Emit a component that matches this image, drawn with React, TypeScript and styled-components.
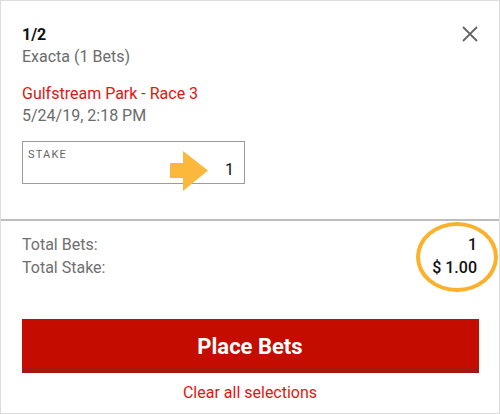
import React from "react"
import styled, { createGlobalStyle } from "styled-components"

const GlobalStyle = createGlobalStyle`
  html, body {
    margin: 0;
    padding: 0;
    background: #ffffff;
  }
  body {
    font-family: Roboto, "Liberation Sans", sans-serif;
  }
`

export default function App(){
  return(
    <>
      <GlobalStyle />
      <Slip>
        <BetSection>
          <Header>
            <div>
              <Count>1/2</Count>
              <Muted>Exacta (1 Bets)</Muted>
            </div>
            <CloseButton aria-label="close">
              <svg width="16" height="16" viewBox="0 0 16 16">
                <path d="M1 1 L15 15 M15 1 L1 15" stroke="#666" strokeWidth="1.8" fill="none" />
              </svg>
            </CloseButton>
          </Header>
          <Race>
            <RaceName>Gulfstream Park - Race 3</RaceName>
            <Muted>5/24/19, 2:18 PM</Muted>
          </Race>
          <StakeBox>
            <StakeLabel>STAKE</StakeLabel>
            <StakeValue>1</StakeValue>
            <Arrow width="40" height="41" viewBox="0 0 40 41">
              <polygon points="0,12 13,12 13,0 38,19.5 13,40 13,27 0,27" fill="#fbb83a" />
            </Arrow>
          </StakeBox>
        </BetSection>
        <Divider />
        <Totals>
          <TotalRow>
            <span>Total Bets:</span>
            <TotalValue>1</TotalValue>
          </TotalRow>
          <TotalRow>
            <span>Total Stake:</span>
            <TotalValue>$ 1.00</TotalValue>
          </TotalRow>
          <Highlight />
        </Totals>
        <Actions>
          <PlaceBets>Place Bets</PlaceBets>
          <ClearLink>Clear all selections</ClearLink>
        </Actions>
      </Slip>
    </>
  )
}

const Slip = styled.div`
  box-sizing: border-box;
  width: 500px;
  height: 414px;
  border: 1px solid #dcdcdc;
  display: flex;
  flex-direction: column;
  background: #fff;
`

const BetSection = styled.div`
  box-sizing: border-box;
  padding: 23px 21px 0 21px;
  height: 218px;
`

const Header = styled.div`
  display: flex;
  justify-content: space-between;
  align-items: flex-start;
`

const Count = styled.div`
  font-size: 16px;
  line-height: 22px;
  font-weight: 700;
  color: #111;
`

const Muted = styled.div`
  font-size: 16px;
  line-height: 22px;
  color: #6b6b6b;
`

const CloseButton = styled.button`
  border: none;
  background: transparent;
  padding: 0;
  margin: 2px 0 0 0;
  width: 16px;
  height: 16px;
  cursor: pointer;
  svg { display: block; }
`

const Race = styled.div`
  margin-top: 15px;
`

const RaceName = styled.div`
  font-size: 16px;
  line-height: 22px;
  color: #e3150f;
`

const StakeBox = styled.div`
  position: relative;
  box-sizing: border-box;
  margin-top: 14px;
  width: 223px;
  height: 43px;
  border: 1px solid #9c9c9c;
  padding: 6px 10px 0 5px;
`

const StakeLabel = styled.div`
  font-size: 11px;
  line-height: 13px;
  letter-spacing: 1.2px;
  color: #666;
`

const StakeValue = styled.div`
  text-align: right;
  font-size: 16px;
  line-height: 18px;
  color: #111;
`

const Arrow = styled.svg`
  position: absolute;
  left: 147px;
  top: 9px;
`

const Divider = styled.div`
  height: 2px;
  background: #bdbdbd;
`

const Totals = styled.div`
  position: relative;
  box-sizing: border-box;
  padding: 12px 22px 0 21px;
  height: 82px;
`

const TotalRow = styled.div`
  display: flex;
  justify-content: space-between;
  font-size: 16px;
  line-height: 23px;
  color: #6f6f6f;
`

const TotalValue = styled.span`
  color: #111;
  font-weight: 500;
`

const Highlight = styled.div`
  position: absolute;
  box-sizing: border-box;
  left: 415px;
  top: 1px;
  width: 82px;
  height: 70px;
  border: 4px solid #fbb12b;
  border-radius: 50%;
`

const Actions = styled.div`
  display: flex;
  flex-direction: column;
  align-items: center;
  padding: 16px 21px 0 21px;
`

const PlaceBets = styled.button`
  box-sizing: border-box;
  width: 457px;
  height: 54px;
  border: none;
  border-bottom: 5px solid #a91510;
  background: #c40d00;
  color: #fff;
  font-family: Roboto, "Liberation Sans", sans-serif;
  font-size: 22px;
  font-weight: 700;
  padding: 5px 0 0 0;
  cursor: pointer;
`

const ClearLink = styled.a`
  margin-top: 9px;
  font-size: 16px;
  line-height: 22px;
  color: #e3150f;
  cursor: pointer;
`
